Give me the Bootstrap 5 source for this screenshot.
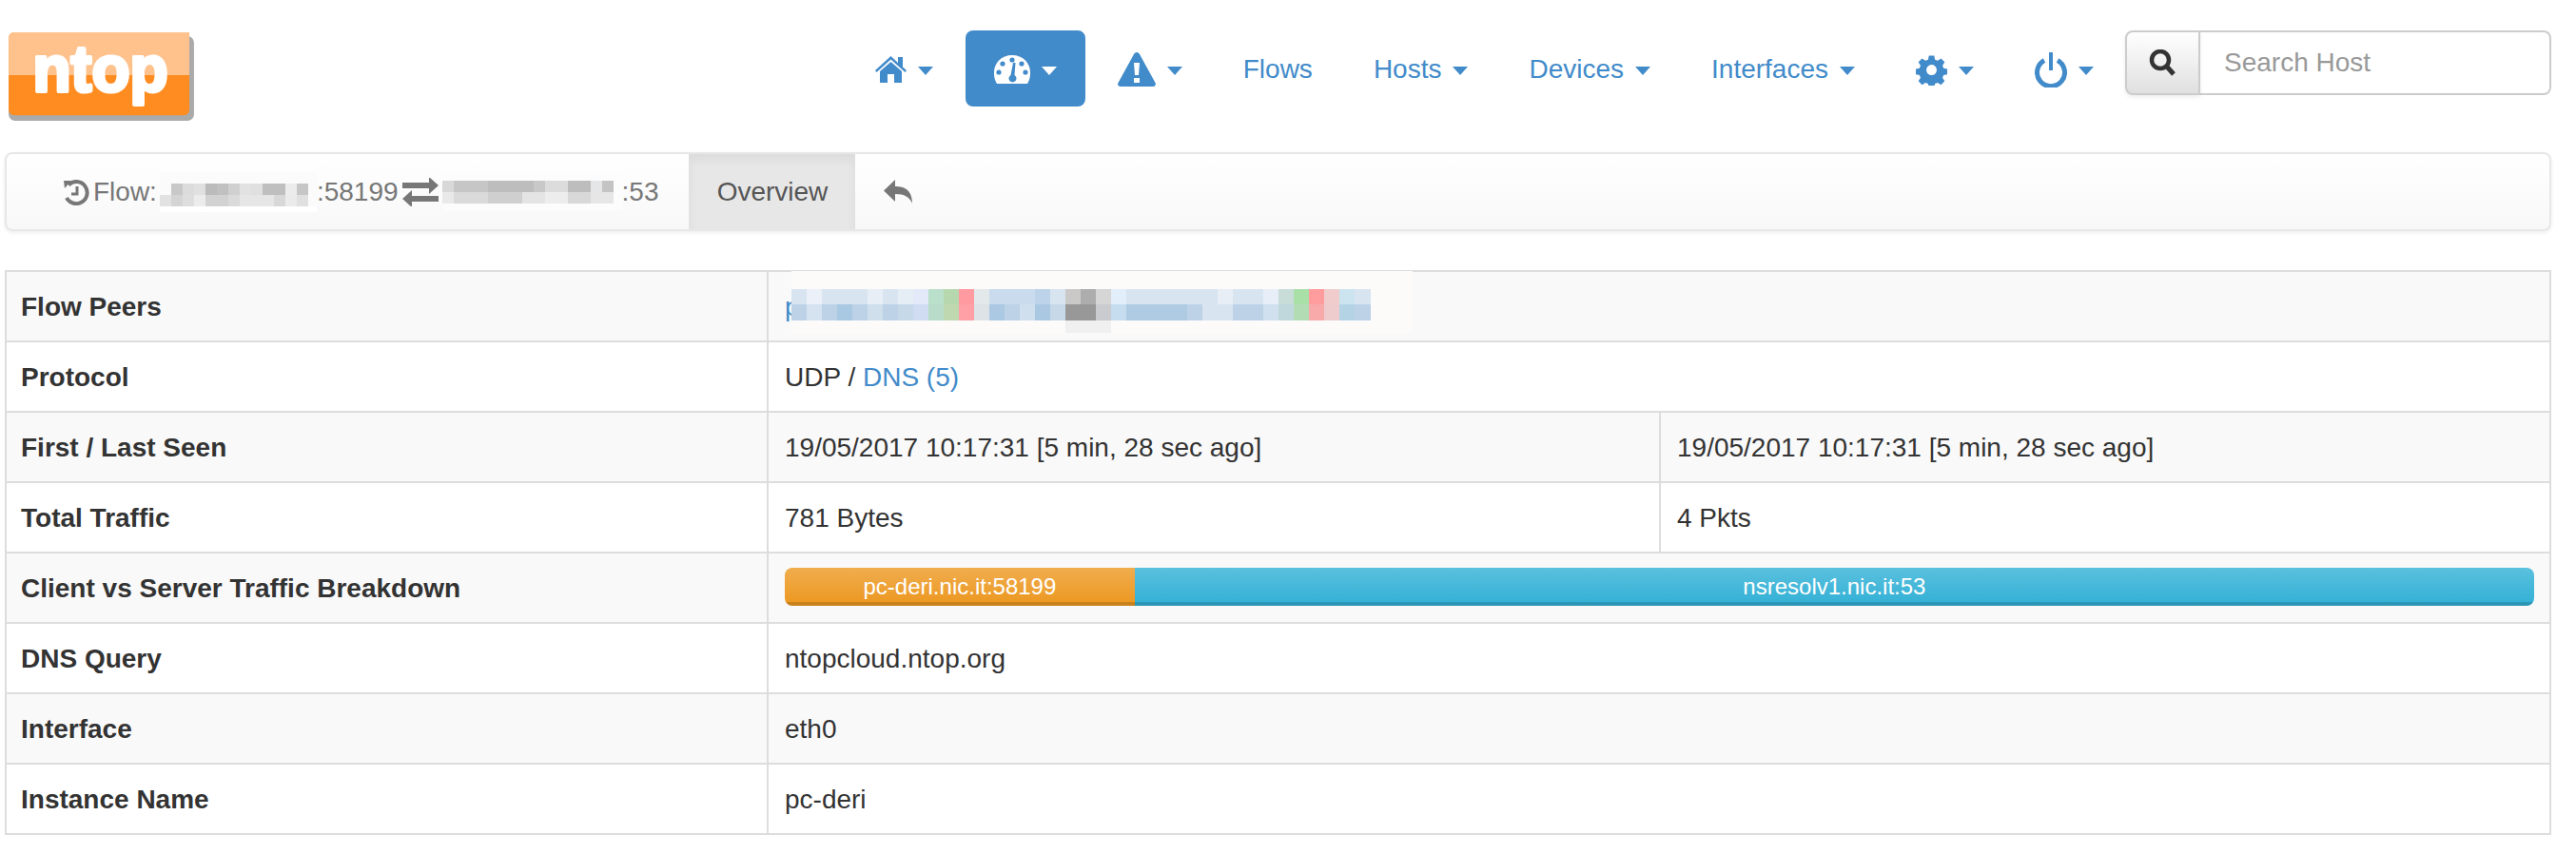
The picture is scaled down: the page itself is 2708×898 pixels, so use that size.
<!DOCTYPE html>
<html lang="en">
<head>
<meta charset="utf-8">
<title>ntop flow</title>
<link href="https://cdn.jsdelivr.net/npm/bootstrap@5.3.0/dist/css/bootstrap.min.css" rel="stylesheet">
<style>
body{font-family:"Liberation Sans",Arial,sans-serif;font-size:28px;line-height:40px;color:#333;background:#fff;padding:32px 26px 0 5px}
.top-row{height:80px}
.ntop-logo{width:196px;height:94px;margin-left:4px;display:block;margin-top:2px}
.main-pills{gap:4px;flex-wrap:nowrap}
.main-pills .nav-link{color:#428bca;padding:21px 30px 19px;font-size:28px;line-height:40px;border-radius:8px;height:80px;white-space:nowrap;display:flex;align-items:center}
.main-pills .nav-link.active{background:#428bca;color:#fff}
.main-pills .dropdown-toggle::after{margin-left:12px;border-top-width:9px;border-left-width:8px;border-right-width:8px;border-bottom:0;vertical-align:middle;flex:none;margin-top:2px}
.host-search{width:448px;height:68px;margin-left:3px;flex:none;align-self:flex-start}
.host-search .btn{width:79px;height:68px;padding:0;background:linear-gradient(#fff,#e0e0e0);border:2px solid #ccc;border-radius:8px 0 0 8px;box-shadow:0 2px 4px rgba(0,0,0,.08);display:flex;align-items:center;justify-content:center}
.host-search .form-control{height:68px;font-size:28px;line-height:40px;border:2px solid #ccc;border-left:0;border-radius:0 8px 8px 0;padding:12px 26px;color:#555}
.host-search .form-control::placeholder{color:#999}
.flow-bar{height:83px;margin-top:48px;border:2px solid #e7e7e7;border-radius:8px;background:linear-gradient(#fff,#f8f8f8);box-shadow:0 2px 4px rgba(0,0,0,.07);padding:0}
.flow-label{color:#777;display:flex;align-items:center;padding-left:59px;height:79px;white-space:nowrap}
.flow-mosaic-a{margin-left:3px}
.flow-tab{color:#555;background:#e7e7e7;box-shadow:inset 0 6px 12px rgba(0,0,0,.05);height:79px;width:175px;display:flex;align-items:center;justify-content:center;margin-left:32px}
.flow-back{color:#777;padding:0 30px;height:79px;display:flex;align-items:center}
.peer-table{margin-top:41px;margin-bottom:0;width:2677px;table-layout:fixed;border-color:#ddd;color:#333;--bs-table-color:#333;--bs-table-striped-color:#333;--bs-table-border-color:#ddd;--bs-table-striped-bg:#f9f9f9}
.peer-table th,.peer-table td{padding:17px 16px 15px 17px;line-height:40px;border:2px solid #ddd;vertical-align:top;height:74px}
.peer-table th{padding-left:15px}
.peer-table a{color:#428bca;text-decoration:none}
.w-first{width:801px}.w-second{width:938px}
.peer-anchor{position:relative;display:inline-block}
.peer-mosaic{position:absolute;left:7px;top:-18px}
.traffic-bar{height:40px;border-radius:8px;--bs-progress-bg:#f5f5f5;background:#f5f5f5;font-size:24px;margin-top:-2px}
.traffic-bar .progress-bar{font-size:24px;line-height:38px;box-shadow:inset 0 -4px 0 rgba(0,0,0,.15);overflow:hidden}
.bar-client{background:linear-gradient(#f0ad4e,#ec971f);width:20%}
.bar-server{background:linear-gradient(#5bc0de,#31b0d5);width:80%}
.ico{display:block;flex:none}
</style>
</head>
<body>
<header class="d-flex justify-content-between top-row">
  <svg class="ntop-logo" viewBox="0 0 200 96" aria-label="ntop logo">
    <rect x="0" y="4" width="199" height="91" rx="7" fill="#aaa"/>
    <rect x="0" y="0" width="194" height="89" rx="6" fill="#ff8c21"/>
    <path d="M0 46V6a6 6 0 0 1 6-6h188v46z" fill="#ffc28d"/>
    <text x="26" y="63" font-family="Liberation Sans" font-weight="700" font-size="70" fill="#fff" stroke="#fff" stroke-width="4" stroke-linejoin="round" textLength="145" lengthAdjust="spacingAndGlyphs">ntop</text>
  </svg>
  <div class="d-flex align-items-start">
    <ul class="nav nav-pills main-pills">
      <li class="nav-item dropdown"><a class="nav-link dropdown-toggle" href="#" aria-label="Home">
        <svg class="ico" width="33" height="28" viewBox="0 0 33 28" fill="#428bca"><path d="M5 16 16.500 6 28 16V28H20V19H13V28H5z"/><path d="M0 15 16.500 0 24 7V1H29V11.500L33 15 31.500 17 16.500 3.500 1.500 17z"/></svg></a></li>
      <li class="nav-item dropdown"><a class="nav-link dropdown-toggle active" href="#" aria-label="Dashboard">
        <svg class="ico" width="38" height="30" viewBox="0 0 38 30"><path d="M3 30C0 25 0 21 0 18 0 8 8 0 19 0S38 8 38 18C38 21 38 25 35 30z" fill="#fff"/><g fill="#428bca"><circle cx="19" cy="5" r="2.600"/><circle cx="9" cy="9" r="2.600"/><circle cx="29" cy="9" r="2.600"/><circle cx="5" cy="18" r="2.600"/><circle cx="33" cy="18" r="2.600"/><path d="M20 8h2.500l-1 13a4 4 0 1 1-4 0z"/></g></svg></a></li>
      <li class="nav-item dropdown"><a class="nav-link dropdown-toggle" href="#" aria-label="Alerts">
        <svg class="ico" width="40" height="36" viewBox="0 0 40 36"><path d="M20 0c1.500 0 2.500 1 3 2L39.500 32c1 2 0 4-2.500 4H3c-2.500 0-3.500-2-2.500-4L17 2c.5-1 1.500-2 3-2z" fill="#428bca"/><path d="M17 11h6l-1 13h-4zM17 27h6v5h-6z" fill="#fff"/></svg></a></li>
      <li class="nav-item"><a class="nav-link" href="#">Flows</a></li>
      <li class="nav-item dropdown"><a class="nav-link dropdown-toggle" href="#">Hosts</a></li>
      <li class="nav-item dropdown"><a class="nav-link dropdown-toggle" href="#">Devices</a></li>
      <li class="nav-item dropdown"><a class="nav-link dropdown-toggle" href="#">Interfaces</a></li>
      <li class="nav-item dropdown"><a class="nav-link dropdown-toggle" href="#" aria-label="Settings">
        <svg class="ico" width="33" height="33" viewBox="0 0 33 33" fill="#428bca"><path fill-rule="evenodd" d="M13.500 0h6l1 4.600 3 1.200 4-2.500 4.200 4.200-2.500 4 1.200 3 4.600 1v6l-4.600 1-1.200 3 2.500 4-4.200 4.200-4-2.500-3 1.200-1 4.600h-6l-1-4.600-3-1.200-4 2.500-4.200-4.200 2.500-4-1.200-3-4.600-1v-6l4.600-1 1.200-3-2.500-4L5.500 3.300l4 2.500 3-1.200zM16.500 10.500a6 6 0 1 0 0 12 6 6 0 0 0 0-12z" transform="translate(1.500 1.500) scale(.91)"/></svg></a></li>
      <li class="nav-item dropdown"><a class="nav-link dropdown-toggle" href="#" aria-label="Power">
        <svg class="ico" width="34" height="37" viewBox="0 0 34 37" fill="none" stroke="#428bca" stroke-width="5"><path d="M10 8.500a14.500 14.500 0 1 0 14 0"/><path d="M17 0V19" stroke-width="4"/></svg></a></li>
    </ul>
    <form class="input-group host-search" role="search">
      <button class="btn" type="button" aria-label="Search">
        <svg width="30" height="28" viewBox="0 0 30 28" fill="none" stroke="#333"><circle cx="12" cy="11" r="9" stroke-width="4.500"/><path d="M18 17l8 9" stroke-width="5"/></svg>
      </button>
      <input class="form-control" type="text" placeholder="Search Host">
    </form>
  </div>
</header>

<nav class="navbar flow-bar justify-content-start flex-nowrap">
  <span class="flow-label">
    <svg class="ico me-1" width="28" height="28" viewBox="0 0 28 28" fill="none" stroke="#777" stroke-width="4"><path d="M6 6.500A11.500 11.500 0 1 1 4 20"/><path d="M1 2 9 2 2 10z" fill="#777" stroke="none"/><path d="M15 8v8H9" stroke-width="3"/></svg>
    Flow:<svg class="ico flow-mosaic-a" width="165" height="42" viewBox="0 0 165 42" shape-rendering="crispEdges">
      <rect width="165" height="42" fill="#fbfbfb"/>
      <rect x="12" y="12" width="12" height="12" fill="#c8c8c8"/><rect x="24" y="12" width="12" height="12" fill="#dcdcdc"/><rect x="36" y="12" width="12" height="12" fill="#e0e0e0"/><rect x="48" y="12" width="12" height="12" fill="#bbb"/><rect x="60" y="12" width="12" height="12" fill="#c0c0c0"/><rect x="72" y="12" width="12" height="12" fill="#d0d0d0"/><rect x="84" y="12" width="12" height="12" fill="#e2e2e2"/><rect x="96" y="12" width="12" height="12" fill="#e0e0e0"/><rect x="108" y="12" width="24" height="12" fill="#bfbfbf"/><rect x="132" y="12" width="12" height="12" fill="#ececec"/><rect x="144" y="12" width="12" height="12" fill="#c6c6c6"/>
      <rect y="24" width="12" height="12" fill="#e2e2e2"/><rect x="12" y="24" width="12" height="12" fill="#d4d4d4"/><rect x="24" y="24" width="12" height="12" fill="#dedede"/><rect x="36" y="24" width="12" height="12" fill="#ececec"/><rect x="48" y="24" width="24" height="12" fill="#d2d2d2"/><rect x="72" y="24" width="12" height="12" fill="#dadada"/><rect x="84" y="24" width="36" height="12" fill="#e6e6e6"/><rect x="120" y="24" width="12" height="12" fill="#d8d8d8"/><rect x="132" y="24" width="12" height="12" fill="#ebebeb"/><rect x="144" y="24" width="12" height="12" fill="#e0e0e0"/>
      <rect y="36" width="165" height="6" fill="#fff"/>
    </svg>:58199
    <svg class="ico mx-1" width="38" height="30" viewBox="0 0 38 30" fill="#777"><path d="M0 6h28V0l10 9-10 9v-6H0z" transform="translate(0 -1)"/><path d="M38 18H10v-6L0 21l10 9v-6h28z" transform="translate(0 1)"/></svg>
    <svg class="ico" width="189" height="40" viewBox="0 0 189 40" shape-rendering="crispEdges">
      <rect width="189" height="40" fill="#fcfcfc"/>
      <rect y="8" width="12" height="12" fill="#d8d8d8"/><rect x="12" y="8" width="36" height="12" fill="#c6c6c6"/><rect x="48" y="8" width="48" height="12" fill="#bdbdbd"/><rect x="96" y="8" width="12" height="12" fill="#c8c8c8"/><rect x="108" y="8" width="24" height="12" fill="#dcdcdc"/><rect x="132" y="8" width="24" height="12" fill="#bdbdbd"/><rect x="156" y="8" width="12" height="12" fill="#e4e6e8"/><rect x="168" y="8" width="12" height="12" fill="#c4c4c4"/>
      <rect y="20" width="12" height="12" fill="#e9e9e9"/><rect x="12" y="20" width="36" height="12" fill="#dadada"/><rect x="48" y="20" width="36" height="12" fill="#cfcfcf"/><rect x="84" y="20" width="24" height="12" fill="#e4e4e4"/><rect x="108" y="20" width="24" height="12" fill="#ededed"/><rect x="132" y="20" width="24" height="12" fill="#d8d8d8"/><rect x="156" y="20" width="24" height="12" fill="#e6e6e6"/>
    </svg>:53
  </span>
  <span class="flow-tab">Overview</span>
  <a class="flow-back" href="#" aria-label="Back">
    <svg width="30" height="25" viewBox="0 0 30 25" fill="#777"><path d="M12 0V7C22 7 30 11 30 25 27 18 22 15 12 15V23L0 11.500z"/></svg>
  </a>
</nav>

<table class="table table-bordered table-striped peer-table">
  <colgroup><col class="w-first"><col class="w-second"><col></colgroup>
  <tbody>
    <tr><th scope="row">Flow Peers</th><td colspan="2"><span class="peer-anchor"><a href="#">pc-deri.nic.it</a>
      <svg class="peer-mosaic" width="653" height="65" viewBox="0 0 653 65" shape-rendering="crispEdges">
        <rect width="653" height="65" fill="#fcfbfa"/>
        <rect y="19" width="609" height="33" fill="#d8e5f1"/>
        <rect x="16" y="19" width="16" height="16" fill="#ecf0f8"/><rect x="80" y="19" width="16" height="16" fill="#e8eef6"/><rect x="112" y="19" width="16" height="16" fill="#e5edf5"/><rect x="128" y="19" width="16" height="16" fill="#e3e9f8"/><rect x="144" y="19" width="16" height="16" fill="#badfca"/><rect x="160" y="19" width="16" height="16" fill="#b7d8ae"/><rect x="176" y="19" width="16" height="16" fill="#ff9aa0"/><rect x="192" y="19" width="16" height="16" fill="#e3e8ea"/><rect x="208" y="19" width="48" height="16" fill="#c9dbec"/><rect x="256" y="19" width="16" height="16" fill="#bdd3e9"/><rect x="288" y="19" width="16" height="16" fill="#cbc9c8"/><rect x="304" y="19" width="16" height="16" fill="#adadad"/><rect x="320" y="19" width="16" height="16" fill="#d6d6d6"/><rect x="336" y="19" width="16" height="16" fill="#e2eefa"/><rect x="448" y="19" width="16" height="16" fill="#e8eef5"/><rect x="496" y="19" width="16" height="16" fill="#e8eef8"/><rect x="512" y="19" width="16" height="16" fill="#c8dcd8"/><rect x="528" y="19" width="16" height="16" fill="#a8e0a8"/><rect x="544" y="19" width="16" height="16" fill="#ff9c9e"/><rect x="560" y="19" width="16" height="16" fill="#f0cccc"/><rect x="576" y="19" width="16" height="16" fill="#cce4f0"/>
        <rect y="35" width="609" height="17" fill="#bdd2e7"/>
        <rect x="16" y="35" width="16" height="17" fill="#d5e2f0"/><rect x="48" y="35" width="16" height="17" fill="#a9c8e2"/><rect x="80" y="35" width="16" height="17" fill="#cfe0ec"/><rect x="112" y="35" width="16" height="17" fill="#c6d9e8"/><rect x="128" y="35" width="16" height="17" fill="#cfdcf2"/><rect x="144" y="35" width="16" height="17" fill="#b9dcca"/><rect x="160" y="35" width="16" height="17" fill="#c0d8b0"/><rect x="176" y="35" width="16" height="17" fill="#ff9fa6"/><rect x="192" y="35" width="16" height="17" fill="#dde3e6"/><rect x="208" y="35" width="16" height="17" fill="#abc9e2"/><rect x="240" y="35" width="16" height="17" fill="#cfdfee"/><rect x="256" y="35" width="16" height="17" fill="#abc8e3"/><rect x="272" y="35" width="16" height="17" fill="#c7d8e8"/><rect x="288" y="35" width="32" height="17" fill="#989898"/><rect x="320" y="35" width="16" height="17" fill="#c9cbce"/><rect x="336" y="35" width="16" height="17" fill="#c6dcef"/><rect x="352" y="35" width="64" height="17" fill="#afcae3"/><rect x="432" y="35" width="32" height="17" fill="#d8e4ef"/><rect x="496" y="35" width="16" height="17" fill="#d0e0ef"/><rect x="512" y="35" width="16" height="17" fill="#c0d8dc"/><rect x="528" y="35" width="16" height="17" fill="#b2dcb4"/><rect x="544" y="35" width="16" height="17" fill="#f8aaaa"/><rect x="560" y="35" width="16" height="17" fill="#eeccce"/><rect x="576" y="35" width="16" height="17" fill="#b4d4e6"/>
        <rect x="288" y="52" width="48" height="13" fill="#f0f0f0"/>
      </svg></span></td></tr>
    <tr><th scope="row">Protocol</th><td colspan="2">UDP / <a href="#">DNS (5)</a></td></tr>
    <tr><th scope="row">First / Last Seen</th><td>19/05/2017 10:17:31 [5 min, 28 sec ago]</td><td>19/05/2017 10:17:31 [5 min, 28 sec ago]</td></tr>
    <tr><th scope="row">Total Traffic</th><td>781 Bytes</td><td>4 Pkts</td></tr>
    <tr><th scope="row">Client vs Server Traffic Breakdown</th><td colspan="2">
      <div class="progress traffic-bar">
        <div class="progress-bar bar-client" role="progressbar">pc-deri.nic.it:58199</div>
        <div class="progress-bar bar-server" role="progressbar">nsresolv1.nic.it:53</div>
      </div></td></tr>
    <tr><th scope="row">DNS Query</th><td colspan="2">ntopcloud.ntop.org</td></tr>
    <tr><th scope="row">Interface</th><td colspan="2">eth0</td></tr>
    <tr><th scope="row">Instance Name</th><td colspan="2">pc-deri</td></tr>
  </tbody>
</table>
<script src="https://cdn.jsdelivr.net/npm/bootstrap@5.3.0/dist/js/bootstrap.bundle.min.js"></script>
</body>
</html>
